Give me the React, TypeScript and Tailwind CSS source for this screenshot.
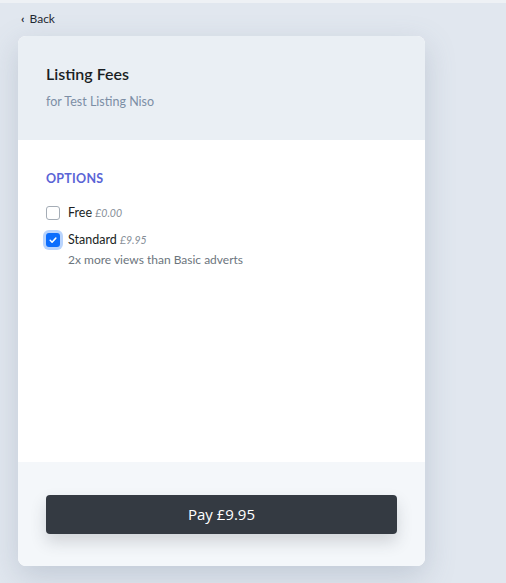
const Check = () => (
  <svg viewBox="0 0 16 16" className="h-[10px] w-[10px]" fill="none">
    <path d="M3.5 8.5l3 3 6-6.5" stroke="white" strokeWidth="2.4" strokeLinecap="round" strokeLinejoin="round" />
  </svg>
);

export default function App() {
  return (
    <div className="min-h-[583px] w-[506px] border-t-[3px] border-[#eef1f5] bg-[#e1e7ef] font-['Lato','Noto_Sans',sans-serif]">
      <a className="flex h-[33px] items-center pb-[1px] pl-[21px] text-[12px] text-[#1f2933]">
        <span className="mr-[5px] text-[12px] font-bold leading-none">‹</span>Back
      </a>
      <div className="ml-[18px] flex h-[530px] w-[407px] flex-col overflow-hidden rounded-[8px] bg-white shadow-[0_10px_30px_rgba(100,116,139,0.25)]">
        <div className="h-[104px] bg-[#eaeff4] px-[28px] pt-[28px]">
          <h1 className="text-[16px] font-semibold leading-[20px] text-[#1b1f24]">Listing Fees</h1>
          <p className="mt-[10px] text-[12.5px] leading-[16px] text-[#7c8ea5]">for Test Listing Niso</p>
        </div>
        <div className="flex-1 px-[28px] pt-[31px]">
          <h2 className="text-[12.5px] font-bold leading-[16px] tracking-[0.02em] text-[#5a64d6]">OPTIONS</h2>
          <div className="mt-[18px] flex items-start gap-[8px]">
            <span className="mt-[1px] h-[14px] w-[14px] rounded-[3px] border border-[#a5adb6] bg-white" />
            <div className="text-[12.5px] leading-[16px] text-[#1b1f24]">
              Free <i className="text-[10.5px] text-[#858d96]">£0.00</i>
            </div>
          </div>
          <div className="mt-[11px] flex items-start gap-[8px]">
            <span className="mt-[1px] flex h-[14px] w-[14px] items-center justify-center rounded-[3px] bg-[#0d6efd] ring-[3px] ring-[#b9d4fd]">
              <Check />
            </span>
            <div className="text-[12.5px] leading-[16px] text-[#1b1f24]">
              Standard <i className="text-[10.5px] text-[#858d96]">£9.95</i>
              <p className="mt-[4px] text-[12px] text-[#6c757d]">2x more views than Basic adverts</p>
            </div>
          </div>
        </div>
        <div className="h-[104px] bg-[#f4f7fa] px-[28px] pt-[33px]">
          <button className="h-[39px] w-[351px] rounded-[4px] bg-[#343a42] font-['Open_Sans','Noto_Sans',sans-serif] text-[15px] text-white shadow-[0_8px_16px_rgba(52,58,66,0.18)]">
            Pay £9.95
          </button>
        </div>
      </div>
    </div>
  );
}
